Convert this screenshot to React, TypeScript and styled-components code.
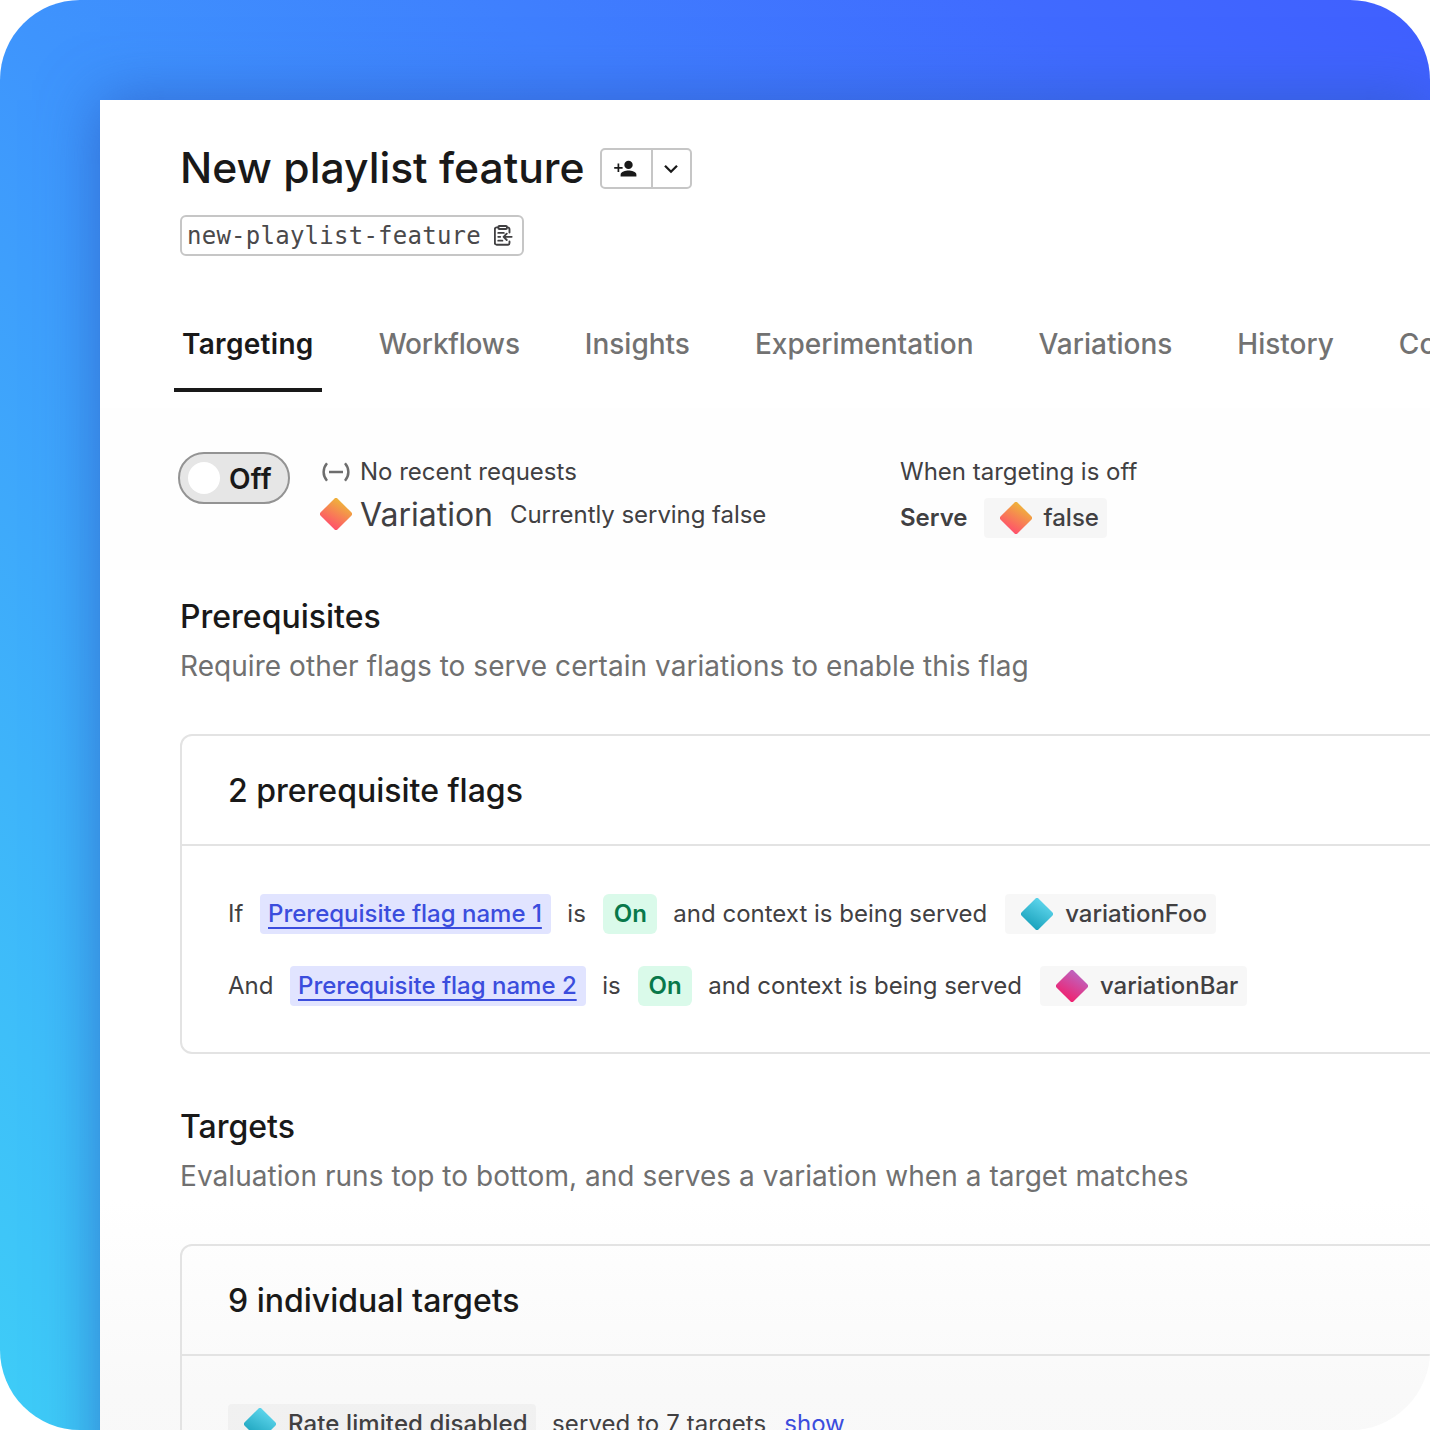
import React, { useId } from 'react';
import styled, { createGlobalStyle } from 'styled-components';

const GlobalStyle = createGlobalStyle`
  *, *::before, *::after { box-sizing: border-box; }
  html, body { margin: 0; padding: 0; background: #fff; overflow: hidden; }
  body { font-family: Inter, 'Liberation Sans', sans-serif; color: #414042; }
  h1, h2, h3, p { margin: 0; }
  svg { display: block; flex: none; }
`;

const Backdrop = styled.div`
  width: 1430px;
  height: 1430px;
  padding: 100px 0 0 100px;
  border-radius: 80px;
  overflow: hidden;
  background:
    linear-gradient(#f9f9f9, #f9f9f9) right bottom / 200px 200px no-repeat,
    linear-gradient(45deg, #3ecdf7 0%, #3ebff9 14%, #3e94fd 50%, #406aff 86%, #405fff 100%);
`;

const Window = styled.main`
  width: 1330px;
  height: 1400px;
  padding-top: 48px;
  overflow: hidden;
  background: linear-gradient(180deg, #fff 0, #fff 1100px, #f9f9f9 1290px, #f8f8f8 1400px);
  box-shadow: 0 0 56px rgba(44, 88, 190, 0.7);
  white-space: nowrap;
`;

const Row = styled.div<{ $gap?: number }>`
  display: flex;
  align-items: center;
  gap: ${(p) => p.$gap ?? 0}px;
`;

const TitleRow = styled(Row)`
  height: 41px;
  padding-left: 80px;
`;

const Title = styled.h1`
  width: 420px;
  padding-bottom: 2px;
  font-size: 42.65px;
  line-height: 40px;
  font-weight: 500;
  color: #191919;
`;

const SplitButton = styled.div`
  display: flex;
  width: 92px;
  height: 41px;
  border: 2px solid #c6c6c6;
  border-radius: 5px;
`;

const SplitPart = styled.button<{ $width: number; $inset: number }>`
  display: flex;
  align-items: center;
  width: ${(p) => p.$width}px;
  padding: 0 0 0 ${(p) => p.$inset}px;
  border: 0;
  background: none;
  & + & { border-left: 2px solid #c6c6c6; }
`;

const KeyBox = styled(Row)`
  width: 344px;
  height: 41px;
  margin: 26px 0 0 80px;
  padding-left: 5px;
  border: 2px solid #c6c6c6;
  border-radius: 6px;
`;

const KeyText = styled.code`
  width: 307px;
  font-family: 'DejaVu Sans Mono', 'Liberation Mono', monospace;
  font-size: 24px;
  line-height: 32px;
  letter-spacing: 0.25px;
  color: #4a494b;
`;

const Tabs = styled.nav`
  display: flex;
  gap: 49px;
  margin: 41px 0 0 74px;
  height: 95px;
`;

const Tab = styled.a<{ $active?: boolean; $ls?: number }>`
  flex: none;
  height: 95px;
  padding: 29px 8px 0;
  border-bottom: 4px solid ${(p) => (p.$active ? '#191919' : 'transparent')};
  font-size: 28px;
  line-height: 36px;
  font-weight: ${(p) => (p.$active ? 600 : 500)};
  letter-spacing: ${(p) => p.$ls ?? 0}px;
  color: ${(p) => (p.$active ? '#191919' : '#727272')};
`;

const StatusBand = styled.section`
  display: flex;
  height: 162px;
  margin-top: 16px;
  padding: 44px 0 0 78px;
  background: #fefefe;
`;

const Toggle = styled.button`
  display: flex;
  align-items: center;
  width: 112px;
  height: 52px;
  padding: 0 0 0 8px;
  border: 2px solid #939393;
  border-radius: 26px;
  background: #e6e6e6;
`;

const ToggleText = styled.span`
  padding-top: 2px;
  font: 600 28px/36px Inter, sans-serif;
  letter-spacing: 0.3px;
  color: #191919;
`;

const Knob = styled.span`
  width: 32px;
  height: 32px;
  margin-right: 9px;
  border-radius: 50%;
  background: #fff;
`;

const Serving = styled.div`
  width: 580px;
  margin-left: 30px;
`;

const Line = styled(Row)<{ $height: number; $inset?: number }>`
  height: ${(p) => p.$height}px;
  padding-left: ${(p) => p.$inset ?? 0}px;
`;

const Body = styled.span<{ $weight?: number; $ls?: number }>`
  font-size: 24px;
  line-height: 40px;
  font-weight: ${(p) => p.$weight ?? 400};
  letter-spacing: ${(p) => p.$ls ?? 0}px;
  color: #414042;
`;

const ServingText = styled(Body)`
  padding-top: 2px;
  letter-spacing: -0.05px;
`;

const VariationName = styled.span`
  width: 150px;
  margin-left: 8px;
  padding-top: 2px;
  font-size: 32px;
  line-height: 40px;
  font-weight: 400;
`;

const Served = styled(Body)`
  margin-left: 16px;
`;

const Pill = styled.span<{ $ls?: number }>`
  display: flex;
  align-items: center;
  gap: 12px;
  height: 40px;
  padding: 0 8.5px 0 16px;
  border-radius: 4px;
  background: rgba(0, 0, 0, 0.03);
  font-size: 24px;
  line-height: 40px;
  font-weight: 500;
  letter-spacing: ${(p) => p.$ls ?? 0}px;
`;

const Block = styled.div`
  padding-top: 27px;
  & + & { padding-top: 53px; }
`;

const SectionTitle = styled.h2`
  padding-left: 80px;
  font-size: 32px;
  line-height: 40px;
  font-weight: 500;
  color: #191919;
`;

const SectionText = styled.p`
  margin-top: 11px;
  padding-left: 80px;
  font-size: 28px;
  line-height: 36px;
  letter-spacing: 0.05px;
  color: #707070;
`;

const Card = styled.section`
  width: 1400px;
  height: 320px;
  margin: 50px 0 0 80px;
  border: 2px solid #e3e3e3;
  border-radius: 12px;
`;

const CardHead = styled.h3`
  height: 110px;
  padding-left: 46px;
  border-bottom: 2px solid #e3e3e3;
  font-size: 32px;
  line-height: 109px;
  font-weight: 500;
  color: #191919;
`;

const Rules = styled.div`
  display: flex;
  flex-direction: column;
  gap: 32px;
  padding: 48px 0 0 46px;
`;

const FlagLink = styled.a`
  height: 40px;
  padding: 0 9.5px 0 8px;
  border-radius: 4px;
  background: #e1e4ff;
  font-size: 24px;
  line-height: 40px;
  font-weight: 500;
  color: #3b4ddd;
  text-decoration: underline;
  text-decoration-thickness: 1.5px;
  text-underline-offset: 5px;
  text-decoration-skip-ink: none;
`;

const OnBadge = styled.span`
  width: 54px;
  height: 40px;
  border-radius: 6px;
  background: #dafaea;
  font-size: 24px;
  line-height: 40px;
  font-weight: 600;
  text-align: center;
  color: #08784a;
`;

const ShowLink = styled.a`
  margin-left: 18px;
  font-size: 24px;
  line-height: 40px;
  color: #3b4ddd;
`;

const Slot = styled.span<{ $width: number }>`
  display: block;
  flex: none;
  width: ${(p) => p.$width}px;
`;

const Tail = styled(Row)`
  margin-left: 16px;
`;

const tones = {
  orange: ['#ff4f6c', '#efb13c'],
  teal: ['#1ba3bd', '#5bd3ea'],
  pink: ['#f0216f', '#bf62bd'],
};

function Diamond({ tone }: { tone: keyof typeof tones }) {
  const id = useId();
  const [from, to] = tones[tone];
  return (
    <svg width="32" height="32" viewBox="0 0 32 32">
      <defs>
        <linearGradient id={id} x1="8" y1="28" x2="22" y2="4" gradientUnits="userSpaceOnUse">
          <stop stopColor={from} />
          <stop offset="1" stopColor={to} />
        </linearGradient>
      </defs>
      <path d="M14.3.7a2.4 2.4 0 0 1 3.4 0l13.6 13.6a2.4 2.4 0 0 1 0 3.4L17.7 31.3a2.4 2.4 0 0 1-3.4 0L.7 17.7a2.4 2.4 0 0 1 0-3.4z" fill={`url(#${id})`} />
    </svg>
  );
}

const PersonAddIcon = () => (
  <svg width="24" height="24" viewBox="0 0 24 24" fill="#191919">
    <circle cx="15.5" cy="7.9" r="4.2" />
    <path d="M7.6 19.6v-1.9c0-3 5.1-4.1 7.9-4.1s7.9 1.1 7.9 4.1v1.9z" />
    <path d="M1.2 10.8h8.4M5.4 6.6v8.4" stroke="#191919" strokeWidth="1.7" />
  </svg>
);

const ChevronIcon = () => (
  <svg width="14" height="10" viewBox="0 0 14 10" fill="none">
    <path d="M1 1.7 7 7.7l6-6" stroke="#191919" strokeWidth="2.3" />
  </svg>
);

const ClipboardIcon = () => (
  <svg width="19" height="21" viewBox="0.4 0 20 22" fill="none" stroke="#414042" strokeWidth="2" strokeLinecap="round" strokeLinejoin="round">
    <path d="M5 2.4H3.2A1.9 1.9 0 0 0 1.3 4.3v14.5a1.9 1.9 0 0 0 1.9 1.9h11.6a1.9 1.9 0 0 0 1.9-1.9v-1.5M14 2.4h.8a1.9 1.9 0 0 1 1.9 1.9v3.6" />
    <rect x="5" y="1" width="9" height="3.2" rx="1" />
    <path d="M4.8 8.3h6M4.8 12.4h2.2M4.8 16.5h4.5" strokeWidth="1.8" />
    <path d="M19 12.4h-8.4M13.8 9.1l-3.3 3.3 3.3 3.3" />
  </svg>
);

const NoRequestsIcon = () => (
  <svg width="28" height="20" viewBox="0 0 28 20" fill="none" stroke="#6d6d6d" strokeWidth="2.5">
    <path d="M5 1.3C.5 6.6.5 13.4 5 18.7M23 1.3c4.5 5.3 4.5 12.1 0 17.4" />
    <path d="M7 10h14" />
  </svg>
);

function SectionBlock({ title, text, children }: { title: string; text: string; children: React.ReactNode }) {
  return (
    <Block>
      <SectionTitle>{title}</SectionTitle>
      <SectionText>{text}</SectionText>
      <Card>{children}</Card>
    </Block>
  );
}

function RuleTail({ tone, name }: { tone: keyof typeof tones; name: string }) {
  return (
    <Tail>
      <Slot $width={36}><Body>is</Body></Slot>
      <OnBadge>On</OnBadge>
      <Served>and context is being served</Served>
      <Slot $width={18} />
      <Pill><Diamond tone={tone} />{name}</Pill>
    </Tail>
  );
}

export default function App() {
  return (
    <>
      <GlobalStyle />
      <Backdrop>
        <Window>
          <TitleRow>
            <Title>New playlist feature</Title>
            <SplitButton>
              <SplitPart $width={49} $inset={11}><PersonAddIcon /></SplitPart>
              <SplitPart $width={39} $inset={11}><ChevronIcon /></SplitPart>
            </SplitButton>
          </TitleRow>
          <KeyBox>
            <KeyText>new-playlist-feature</KeyText>
            <ClipboardIcon />
          </KeyBox>
          <Tabs>
            <Tab $active $ls={0.3}>Targeting</Tab>
            <Tab $ls={-0.2}>Workflows</Tab>
            <Tab>Insights</Tab>
            <Tab>Experimentation</Tab>
            <Tab>Variations</Tab>
            <Tab>History</Tab>
            <Tab>Code references</Tab>
          </Tabs>
          <StatusBand>
            <Toggle><Knob /><ToggleText>Off</ToggleText></Toggle>
            <Serving>
              <Line $height={40} $gap={10} $inset={2}>
                <NoRequestsIcon />
                <Body>No recent requests</Body>
              </Line>
              <Line $height={44}>
                <Diamond tone="orange" />
                <VariationName>Variation</VariationName>
                <ServingText>Currently serving false</ServingText>
              </Line>
            </Serving>
            <div>
              <Line $height={40}><Body>When targeting is off</Body></Line>
              <Line $height={52} $gap={16}>
                <Body $weight={600}>Serve</Body>
                <Pill><Diamond tone="orange" />false</Pill>
              </Line>
            </div>
          </StatusBand>
          <SectionBlock title="Prerequisites" text="Require other flags to serve certain variations to enable this flag">
            <CardHead>2 prerequisite flags</CardHead>
            <Rules>
              <Row>
                <Slot $width={32}><Body>If</Body></Slot>
                <FlagLink>Prerequisite flag name 1</FlagLink>
                <RuleTail tone="teal" name="variationFoo" />
              </Row>
              <Row>
                <Slot $width={62}><Body>And</Body></Slot>
                <FlagLink>Prerequisite flag name 2</FlagLink>
                <RuleTail tone="pink" name="variationBar" />
              </Row>
            </Rules>
          </SectionBlock>
          <SectionBlock title="Targets" text="Evaluation runs top to bottom, and serves a variation when a target matches">
            <CardHead>9 individual targets</CardHead>
            <Rules>
              <Row>
                <Pill $ls={0.1}><Diamond tone="teal" />Rate limited disabled</Pill>
                <Served $ls={0.08}>served to 7 targets</Served>
                <ShowLink>show</ShowLink>
              </Row>
            </Rules>
          </SectionBlock>
        </Window>
      </Backdrop>
    </>
  );
}
